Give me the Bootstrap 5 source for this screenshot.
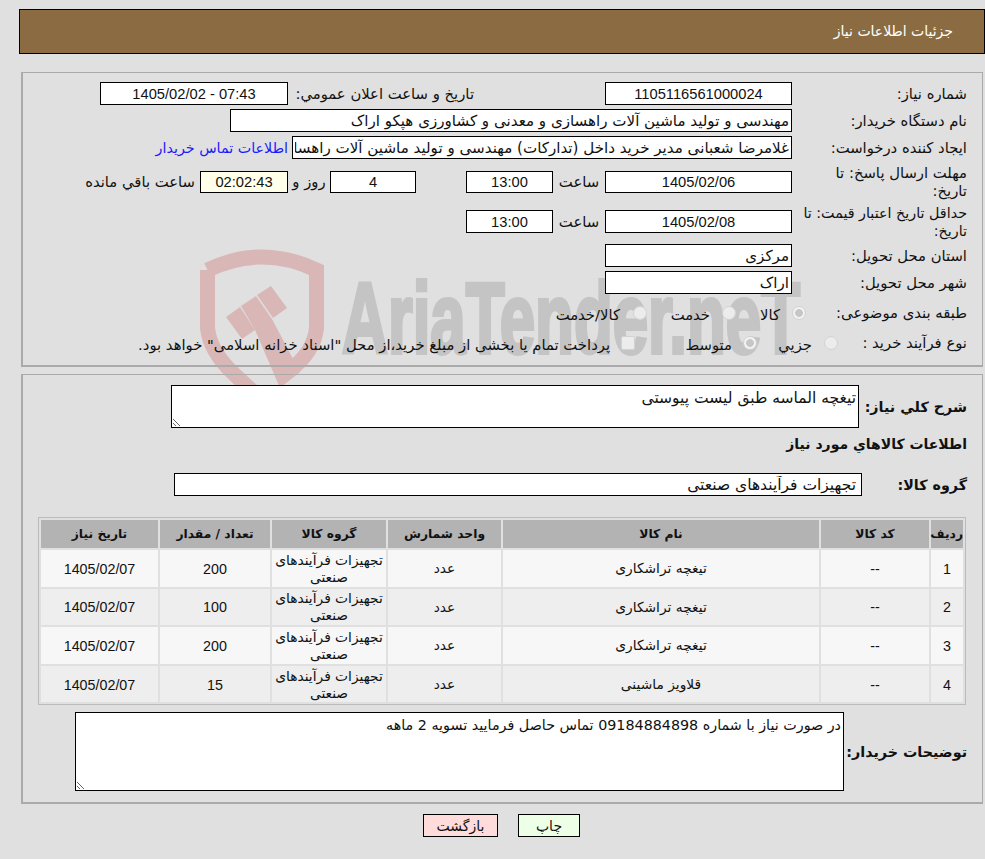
<!DOCTYPE html>
<html lang="fa" dir="rtl">
<head>
<meta charset="utf-8">
<title>جزئیات اطلاعات نیاز</title>
<link href="https://cdn.jsdelivr.net/npm/bootstrap@5.3.0/dist/css/bootstrap.min.css" rel="stylesheet">
<style>
html,body{background:#e0e0e0;}
body{position:relative;height:859px;overflow:hidden;margin:0;font-family:"DejaVu Sans",sans-serif;font-size:14.8px;line-height:18px;color:#111;}
.wm{position:absolute;left:0;top:0;width:985px;height:859px;}
.wm-text{font-family:"Liberation Sans",sans-serif;font-weight:700;font-size:100px;fill:#c4c4c4;stroke:#c4c4c4;stroke-width:4px;}
.head-bar{margin:9px 0 0 0;width:966px;height:45px;background:#8b6c42;border:1px solid #000;color:#fff;padding:0 31px;font-size:14px;line-height:42px;}
.panel-x{position:relative;width:962px;border:1px solid #aaa;border-bottom-width:2px;border-left-width:2px;margin-right:2px;}
.panel-a{margin-top:18px;height:295px;padding:9px 15px 0 0;}
.panel-b{margin-top:7px;height:430px;padding:10px 15px 0 0;}
.lab{width:175px;flex:none;padding-left:6px;}
.lab-wide{width:175px;flex:none;font-size:14.300px;white-space:nowrap;}
.lab-r1{width:161px;flex:none;}
.lab-r2{width:129px;flex:none;}
.fx{display:block;height:23px;border:1px solid #000;background:#fff;font-family:"Liberation Sans",sans-serif;font-size:14.7px;text-align:center;padding:0;border-radius:0;outline:0;color:#111;}
.fx-ar{font-family:"DejaVu Sans",sans-serif;font-size:15.1px;text-align:right;padding:0 2px;}
.fx-grp{width:688px;flex:none;font-size:15.500px;padding:0 5px;}
.fx-sm{height:22px;}
.w187{width:187px;flex:none;}
.w188{width:188px;flex:none;}
.w562{width:562px;flex:none;}
.w500{width:500px;flex:none;}
.w87{width:87px;flex:none;}
.w86{width:86px;flex:none;}
.w88{width:88px;flex:none;}
.ivory{background:#ffffea;}
.r22{height:23px;margin-bottom:4px;}
.r-a{height:37px;}
.r-b{height:37px;margin-top:3px;}
.r-c{height:23px;margin-top:4px;margin-bottom:4px;}
.r-r{height:30px;}
.tt-a{margin-right:131px;width:181px;flex:none;white-space:nowrap;}
.mlink{color:#1a1aff;text-decoration:none;margin-right:4px;white-space:nowrap;font-size:14.3px;}
.gap-a{width:52px;flex:none;text-align:center;white-space:nowrap;}
.gap-b{width:42px;flex:none;text-align:center;white-space:nowrap;}
.gap-c{width:50px;flex:none;}
.sp5{margin-right:5px;white-space:nowrap;}
.rad{appearance:none;-webkit-appearance:none;margin:-1px 0 0 0;width:14px;height:14px;flex:none;background:#ececec;border:1px solid #d2d2d2;border-radius:50%;}
.rad:checked{background:radial-gradient(circle,#c6c6c6 0,#c6c6c6 3.500px,#f2f2f2 4.200px);}
.rad-box{border-radius:2px;}
.b-1,.b-2,.b-3,.b-4,.b-5,.b-6{margin-top:3px;}
.b-1{width:56px;flex:none;padding-right:12px;}
.b-2{width:75px;flex:none;padding-right:12px;}
.b-3{padding-right:13px;white-space:nowrap;}
.b-4{width:67px;flex:none;padding-right:12px;}
.b-5{width:108px;flex:none;padding-right:11px;}
.b-6{padding-right:11px;white-space:nowrap;}
.blab{font-weight:700;font-size:14.3px;white-space:nowrap;flex:none;}
.blab-1{width:108px;}
.blab-2{width:105px;}
.blab-3{width:123px;}
.title-x{margin-top:7px;height:18px;font-size:14px;}
.grp-row{margin-top:20px;}
.ta{display:block;border:1px solid #000;background:#fff;font-family:"DejaVu Sans",sans-serif;line-height:18px;padding:3px 2px;border-radius:0;outline:0;color:#111;}
.ta-1{width:688px;height:43px;font-size:15.500px;}
.ta-2{width:769px;height:79px;font-size:14.3px;}
.ta-row{margin-top:7px;}
.tb-wrap{width:928px;margin-top:21px;margin-right:1px;border:1px solid #bbb;padding:0;}
.grid-t{width:100%;border-collapse:separate;border-spacing:2px;table-layout:fixed;margin:0;font-size:14px;}
.grid-t th{background:#b3b3b3;height:28px;text-align:center;vertical-align:middle;font-size:12.300px;padding:0;font-weight:700;}
.grid-t td{height:36.6px;text-align:center;vertical-align:middle;padding:1px 0 0;line-height:17px;font-size:13.8px;}
.grid-t tbody tr:nth-child(odd) td{background:#f7f7f7;}
.grid-t tbody tr:nth-child(even) td{background:#eee;}
.grid-t td.num{font-family:"Liberation Sans",sans-serif;font-size:14.3px;padding-top:2px;}
.c1{width:32px;}.c2{width:108px;}.c3{width:316px;}.c4{width:113px;}.c5{width:114px;}.c6{width:110px;}.c7{width:117px;}
.btn-x{display:block;height:23px;border:1px solid #000;font-family:"DejaVu Sans",sans-serif;font-size:14px;line-height:20px;padding:0;border-radius:0;color:#111;}
.b-print{width:62px;background:#eeffe8;}
.b-back{width:75px;background:#ffdcdc;}
.btns{margin-top:10px;padding-right:405px;gap:20px;}
</style>
</head>
<body>
<svg class="wm" viewBox="0 0 985 859" aria-hidden="true">
  <g fill="none" stroke="#d9b7b7" stroke-width="15">
    <path d="M207.500 270Q262 244 316.500 270V328Q314 352 290 370"/>
    <path d="M207.500 270V328Q210 352 235 375L262 400"/>
  </g>
  <g fill="#d9b7b7">
    <polygon points="226,317 240,307 255,330 242,339"/>
    <polygon points="241,306 256,296 272,319 300,372 280,388 255,330"/>
    <polygon points="257,295 271,286 287,308 273,318"/>
  </g>
  <text class="wm-text" x="342" y="353" textLength="458" lengthAdjust="spacingAndGlyphs" direction="ltr">AriaTender.neT</text>
</svg>
<div class="head-bar">جزئیات اطلاعات نیاز</div>
<div class="panel-x panel-a">
  <div class="d-flex align-items-center r22">
    <div class="lab">شماره نیاز:</div>
    <input class="fx w187" readonly value="1105116561000024">
    <div class="tt-a">تاريخ و ساعت اعلان عمومي:</div>
    <input class="fx w188 sp5" dir="ltr" readonly value="1405/02/02 - 07:43">
  </div>
  <div class="d-flex align-items-center r22">
    <div class="lab">نام دستگاه خریدار:</div>
    <input class="fx fx-ar w562" readonly value="مهندسی و تولید ماشین آلات راهسازی و معدنی و کشاورزی هپکو اراک">
  </div>
  <div class="d-flex align-items-center r22">
    <div class="lab">ایجاد کننده درخواست:</div>
    <input class="fx fx-ar w500" readonly value="غلامرضا شعبانی مدیر خرید داخل (تدارکات) مهندسی و تولید ماشین آلات راهسازی و معدنی">
    <a class="mlink" href="#">اطلاعات تماس خریدار</a>
  </div>
  <div class="d-flex align-items-center r-a">
    <div class="lab">مهلت ارسال پاسخ: تا<br>تاریخ:</div>
    <input class="fx fx-sm w187" readonly value="1405/02/06">
    <div class="gap-a">ساعت</div>
    <input class="fx fx-sm w87" readonly value="13:00">
    <div class="gap-c"></div>
    <input class="fx fx-sm w86" readonly value="4">
    <div class="gap-b">روز و</div>
    <input class="fx fx-sm w88 ivory" readonly value="02:02:43">
    <div class="sp5">ساعت باقي مانده</div>
  </div>
  <div class="d-flex align-items-center r-b">
    <div class="lab-wide">حداقل تاریخ اعتبار قیمت: تا<br>تاریخ:</div>
    <input class="fx w187" readonly value="1405/02/08">
    <div class="gap-a">ساعت</div>
    <input class="fx w87" readonly value="13:00">
  </div>
  <div class="d-flex align-items-center r-c">
    <div class="lab">استان محل تحویل:</div>
    <input class="fx fx-ar w187" readonly value="مرکزی">
  </div>
  <div class="d-flex align-items-center r22">
    <div class="lab">شهر محل تحویل:</div>
    <input class="fx fx-ar w187" readonly value="اراک">
  </div>
  <div class="d-flex align-items-center r-r">
    <div class="lab-r1">طبقه بندی موضوعی:</div>
    <input class="rad" type="radio" name="a1" disabled checked>
    <div class="b-1">کالا</div>
    <input class="rad" type="radio" name="a1" disabled>
    <div class="b-2">خدمت</div>
    <input class="rad" type="radio" name="a1" disabled>
    <div class="b-3">کالا/خدمت</div>
  </div>
  <div class="d-flex align-items-center r-r">
    <div class="lab-r2">نوع فرآیند خرید :</div>
    <input class="rad" type="radio" name="a2" disabled>
    <div class="b-4">جزيي</div>
    <input class="rad" type="radio" name="a2" disabled checked>
    <div class="b-5">متوسط</div>
    <input class="rad rad-box" type="checkbox" disabled>
    <div class="b-6">پرداخت تمام یا بخشی از مبلغ خرید،از محل "اسناد خزانه اسلامی" خواهد بود.</div>
  </div>
</div>
<div class="panel-x panel-b">
  <div class="d-flex align-items-center">
    <div class="blab blab-1">شرح کلي نیاز:</div>
    <textarea class="ta ta-1" readonly>تیغچه الماسه طبق لیست پیوستی</textarea>
  </div>
  <div class="blab title-x">اطلاعات کالاهاي مورد نیاز</div>
  <div class="d-flex align-items-center grp-row">
    <div class="blab blab-2">گروه کالا:</div>
    <input class="fx fx-ar fx-grp" readonly value="تجهیزات فرآیندهای صنعتی">
  </div>
  <div class="tb-wrap">
    <table class="grid-t">
      <colgroup><col class="c1"><col class="c2"><col class="c3"><col class="c4"><col class="c5"><col class="c6"><col class="c7"></colgroup>
      <thead><tr><th>ردیف</th><th>کد کالا</th><th>نام کالا</th><th>واحد شمارش</th><th>گروه کالا</th><th>تعداد / مقدار</th><th>تاریخ نیاز</th></tr></thead>
      <tbody>
        <tr><td class="num">1</td><td class="num">--</td><td>تیغچه تراشکاری</td><td>عدد</td><td>تجهیزات فرآیندهای صنعتی</td><td class="num">200</td><td class="num">1405/02/07</td></tr>
        <tr><td class="num">2</td><td class="num">--</td><td>تیغچه تراشکاری</td><td>عدد</td><td>تجهیزات فرآیندهای صنعتی</td><td class="num">100</td><td class="num">1405/02/07</td></tr>
        <tr><td class="num">3</td><td class="num">--</td><td>تیغچه تراشکاری</td><td>عدد</td><td>تجهیزات فرآیندهای صنعتی</td><td class="num">200</td><td class="num">1405/02/07</td></tr>
        <tr><td class="num">4</td><td class="num">--</td><td>قلاویز ماشینی</td><td>عدد</td><td>تجهیزات فرآیندهای صنعتی</td><td class="num">15</td><td class="num">1405/02/07</td></tr>
      </tbody>
    </table>
  </div>
  <div class="d-flex align-items-center ta-row">
    <div class="blab blab-3">توضیحات خریدار:</div>
    <textarea class="ta ta-2" readonly>در صورت نیاز با شماره 09184884898 تماس حاصل فرمایید تسویه 2 ماهه</textarea>
  </div>
</div>
<div class="d-flex btns">
  <button class="btn-x b-print" type="button">چاپ</button>
  <button class="btn-x b-back" type="button">بازگشت</button>
</div>
<script src="https://cdn.jsdelivr.net/npm/bootstrap@5.3.0/dist/js/bootstrap.bundle.min.js"></script>
</body>
</html>
